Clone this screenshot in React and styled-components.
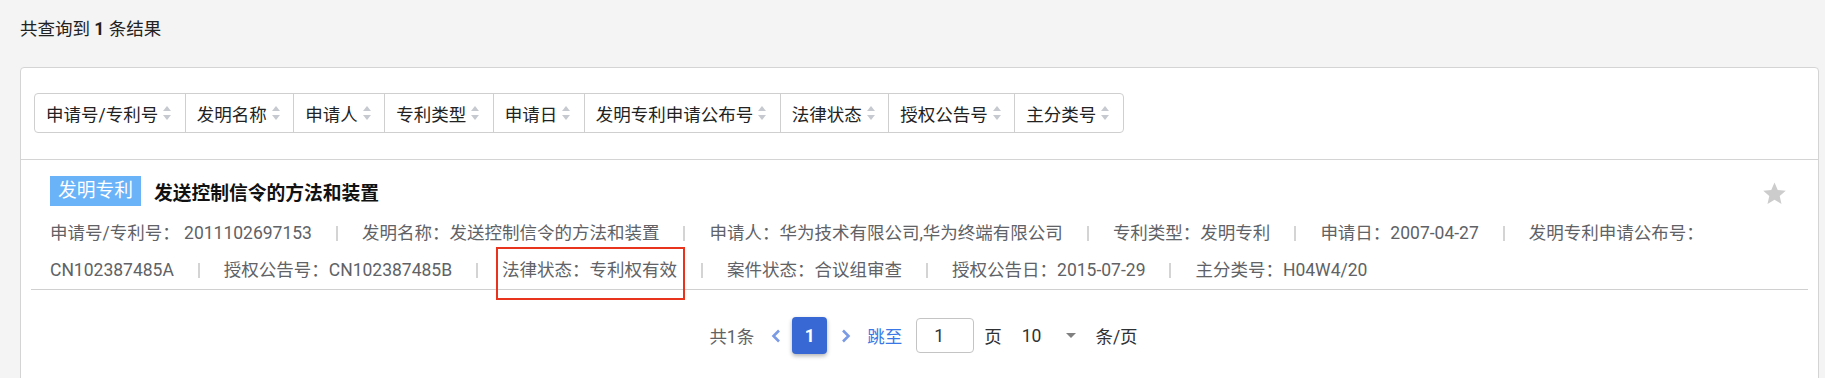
import styled, { createGlobalStyle } from 'styled-components'

const GlobalStyle = createGlobalStyle`
	body {
		margin: 0;
		background: #f4f4f4;
		font-family: Roboto, "Noto Sans CJK SC", sans-serif;
		font-size: 17.5px;
		color: #222;
	}
`

const Page = styled.div`
	padding: 17px 6px 0 20px;
`

const Summary = styled.div`
	line-height: 24px;
	color: #222;
	margin-bottom: 26px;
	b {
		font-weight: 700;
	}
`

const Card = styled.div`
	background: #fff;
	border: 1px solid #d4d4d4;
	border-radius: 4px;
	padding-bottom: 60px;
`

const Toolbar = styled.div`
	padding: 25px 12px 26px 13px;
	border-bottom: 1px solid #d4d4d4;
`

const SortBar = styled.div`
	display: inline-flex;
	height: 40px;
	box-sizing: border-box;
	border: 1px solid #cfcfcf;
	border-radius: 4px;
`

const SortCell = styled.div`
	display: flex;
	align-items: center;
	padding: 0 13.5px 0 11px;
	border-left: ${(props) => (props.first ? 'none' : '1px solid #cfcfcf')};
	color: #222;
	white-space: nowrap;
	cursor: pointer;
	svg {
		margin-left: 5px;
	}
`

const List = styled.div`
	padding: 0 10px;
`

const Item = styled.div`
	padding: 16px 21px 0 19px;
	border-bottom: 1px solid #d0d0d0;
`

const TitleRow = styled.div`
	display: flex;
	align-items: center;
	height: 30px;
	margin-bottom: 9px;
`

const Badge = styled.span`
	background: #6ab3f9;
	color: #fff;
	font-size: 18.75px;
	line-height: 30px;
	padding: 0 8px;
`

const Title = styled.span`
	margin-left: 13px;
	font-size: 18.75px;
	font-weight: 700;
	color: #111;
`

const Star = styled.svg`
	margin-left: auto;
	margin-top: 5px;
`

const Meta = styled.div`
	line-height: 37px;
	color: #606266;
`

const Sep = styled.span`
	display: inline-block;
	width: 2px;
	height: 15px;
	background: #d4d4d4;
	margin: 0 24px;
	vertical-align: -2px;
`

const Marked = styled.span`
	position: relative;
	display: inline-block;
	&::after {
		content: '';
		position: absolute;
		left: -6px;
		right: -8px;
		top: -5px;
		bottom: -11px;
		border: 2px solid #e8341c;
	}
`

const Pager = styled.div`
	display: flex;
	justify-content: center;
	align-items: center;
	height: 37px;
	margin-top: 27px;
	padding-left: 8px;
	color: #303133;
`

const Total = styled.span`
	color: #606266;
`

const Arrow = styled.svg`
	margin-left: ${(props) => props.gap}px;
`

const PageButton = styled.div`
	margin-left: 11px;
	width: 35px;
	height: 37px;
	border-radius: 4px;
	background: #3868d4;
	color: #fff;
	font-weight: 700;
	display: flex;
	align-items: center;
	justify-content: center;
	box-shadow: 0 2px 4px rgba(0, 0, 0, 0.3);
`

const Jump = styled.span`
	margin-left: 16px;
	color: #3b78e7;
`

const JumpInput = styled.div`
	margin-left: 14px;
	width: 58px;
	height: 35px;
	box-sizing: border-box;
	border: 1px solid #c4c4c4;
	border-radius: 4px;
	padding-left: 17px;
	display: flex;
	align-items: center;
	color: #333;
`

const Text = styled.span`
	margin-left: ${(props) => props.gap}px;
`

const Caret = styled.span`
	margin-left: 25px;
	width: 0;
	height: 0;
	border-left: 5px solid transparent;
	border-right: 5px solid transparent;
	border-top: 5px solid #808080;
`

function SortIcon() {
	return (
		<svg width="8" height="14" viewBox="0 0 8 14">
			<polygon points="4,0 8,5 0,5" fill="#c6c9cf" />
			<polygon points="0,9 8,9 4,14" fill="#c6c9cf" />
		</svg>
	)
}

const columns = [
	'申请号/专利号',
	'发明名称',
	'申请人',
	'专利类型',
	'申请日',
	'发明专利申请公布号',
	'法律状态',
	'授权公告号',
	'主分类号',
]

function App() {
	return (
		<Page>
			<GlobalStyle />
			<Summary>
				共查询到 <b>1</b> 条结果
			</Summary>
			<Card>
				<Toolbar>
					<SortBar>
						{columns.map((c, i) => (
							<SortCell key={c} first={i === 0}>
								{c}
								<SortIcon />
							</SortCell>
						))}
					</SortBar>
				</Toolbar>
				<List>
					<Item>
						<TitleRow>
							<Badge>发明专利</Badge>
							<Title>发送控制信令的方法和装置</Title>
							<Star width="25" height="25" viewBox="0 0 24 24">
								<polygon
									points="12,1.5 15.1,8.6 22.8,9.3 17,14.4 18.7,22 12,18 5.3,22 7,14.4 1.2,9.3 8.9,8.6"
									fill="#cccccc"
								/>
							</Star>
						</TitleRow>
						<Meta>
							<span>申请号/专利号： 2011102697153</span>
							<Sep />
							<span>发明名称：发送控制信令的方法和装置</span>
							<Sep />
							<span>申请人：华为技术有限公司,华为终端有限公司</span>
							<Sep />
							<span>专利类型：发明专利</span>
							<Sep />
							<span>申请日：2007-04-27</span>
							<Sep />
							<span>发明专利申请公布号：CN102387485A</span>
							<Sep />
							<span>授权公告号：CN102387485B</span>
							<Sep />
							<Marked>法律状态：专利权有效</Marked>
							<Sep />
							<span>案件状态：合议组审查</span>
							<Sep />
							<span>授权公告日：2015-07-29</span>
							<Sep />
							<span>主分类号：H04W4/20</span>
						</Meta>
					</Item>
					<Pager>
						<Total>共1条</Total>
						<Arrow gap={17} width="10" height="14" viewBox="0 0 10 14">
							<polyline points="8,1.5 2.5,7 8,12.5" fill="none" stroke="#7a9be4" strokeWidth="2.6" />
						</Arrow>
						<PageButton>1</PageButton>
						<Arrow gap={14} width="10" height="14" viewBox="0 0 10 14">
							<polyline points="2,1.5 7.5,7 2,12.5" fill="none" stroke="#7a9be4" strokeWidth="2.6" />
						</Arrow>
						<Jump>跳至</Jump>
						<JumpInput>1</JumpInput>
						<Text gap={10}>页</Text>
						<Text gap={20}>10</Text>
						<Caret />
						<Text gap={19}>条/页</Text>
					</Pager>
				</List>
			</Card>
		</Page>
	)
}

export default App
